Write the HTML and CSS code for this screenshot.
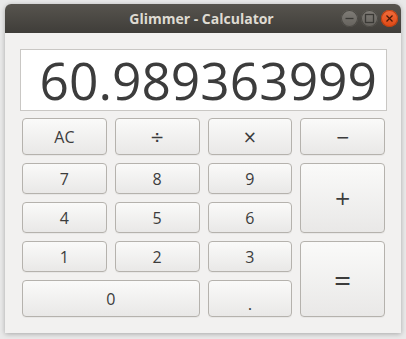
FILE: index.html
```html
<!DOCTYPE html>
<html>
<head>
<meta charset="utf-8">
<link rel="stylesheet" href="styles.css">
</head>
<body>
<div class="window">
  <div class="titlebar">
    <span class="title">Glimmer - Calculator</span>
    <div class="controls">
      <span class="wbtn min"><svg width="17" height="17" viewBox="0 0 17 17"><line x1="4.5" y1="8.5" x2="12.5" y2="8.5" stroke="#3a3935" stroke-width="1.3"/></svg></span>
      <span class="wbtn max"><svg width="17" height="17" viewBox="0 0 17 17"><rect x="4.5" y="4.5" width="8" height="8" fill="none" stroke="#3a3935" stroke-width="1.3"/></svg></span>
      <span class="wbtn close"><svg width="17" height="17" viewBox="0 0 17 17"><path d="M5.5 5.5 L11.5 11.5 M11.5 5.5 L5.5 11.5" stroke="#4a1a08" stroke-width="1.3"/></svg></span>
    </div>
  </div>
  <div class="content">
    <div class="display"><span class="value">60.989363999</span></div>
    <div class="keys">
      <button class="key">AC</button>
      <button class="key op">÷</button>
      <button class="key op">×</button>
      <button class="key op">−</button>
      <button class="key">7</button>
      <button class="key">8</button>
      <button class="key">9</button>
      <button class="key tall plus">+</button>
      <button class="key">4</button>
      <button class="key">5</button>
      <button class="key">6</button>
      <button class="key">1</button>
      <button class="key">2</button>
      <button class="key">3</button>
      <button class="key tall eq">=</button>
      <button class="key wide">0</button>
      <button class="key dot">.</button>
    </div>
  </div>
</div>
</body>
</html>
```

FILE: styles.css
```css
html, body {
  margin: 0;
  padding: 0;
}
body {
  width: 406px;
  height: 339px;
  background: #e9e9e9;
  overflow: hidden;
  font-family: "Open Sans", "DejaVu Sans", sans-serif;
}
.window {
  margin: 4px 0 0 5px;
  width: 396px;
  height: 329px;
  background: #f2f1f0;
  border-radius: 6px 6px 0 0;
  box-shadow: 0 1px 5px rgba(0,0,0,0.28);
  display: flex;
  flex-direction: column;
}
.titlebar {
  height: 29px;
  flex: none;
  background: linear-gradient(#57544e, #3f3d39);
  border-radius: 6px 6px 0 0;
  display: flex;
  align-items: center;
  justify-content: center;
  position: relative;
}
.title {
  color: #dfdbd2;
  font-weight: bold;
  font-size: 14px;
  margin-left: -3px;
}
.controls {
  position: absolute;
  right: 3px;
  top: 6px;
  display: flex;
  gap: 3px;
}
.wbtn {
  width: 17px;
  height: 17px;
  border-radius: 50%;
  display: block;
}
.wbtn svg { display: block; }
.min, .max {
  background: linear-gradient(#807d77, #65625d);
  box-shadow: inset 0 0 0 1px #4a4843;
}
.close {
  background: linear-gradient(#f26d3d, #dd4814);
  box-shadow: inset 0 0 0 1px #b83f12;
}
.content {
  padding: 16px 14px 16px 15px;
  display: flex;
  flex-direction: column;
  gap: 7px;
}
.display {
  height: 60px;
  background: #ffffff;
  border: 1px solid #c9c7c4;
  display: flex;
  align-items: center;
  justify-content: flex-end;
  padding-right: 9px;
}
.value {
  color: #3c3c3c;
  font-size: 51.5px;
  line-height: 56px;
  white-space: nowrap;
}
.keys {
  display: grid;
  grid-template-columns: repeat(4, 1fr);
  grid-template-rows: 37px 31px 31px 31px 37px;
  column-gap: 8px;
  row-gap: 8px;
  padding: 0 2px 0 2px;
}
.key {
  font-family: "Open Sans", "DejaVu Sans", sans-serif;
  font-size: 16px;
  color: #3c3c3c;
  background: linear-gradient(#fafaf9, #e9e8e7);
  border: 1px solid #b5b2ad;
  border-radius: 4px;
  padding: 0;
  margin: 0;
  box-shadow: 0 1px 0 rgba(0,0,0,0.04);
}
.op {
  font-family: "DejaVu Sans", sans-serif;
  font-size: 17px;
}
.tall {
  grid-row: span 2;
  font-family: "DejaVu Sans", sans-serif;
  font-size: 20px;
}
.eq {
  font-family: "Open Sans", sans-serif;
  font-size: 30px;
}
.wide {
  grid-column: span 2;
}
.dot {
  padding-top: 10px;
  font-size: 17px;
}
```
